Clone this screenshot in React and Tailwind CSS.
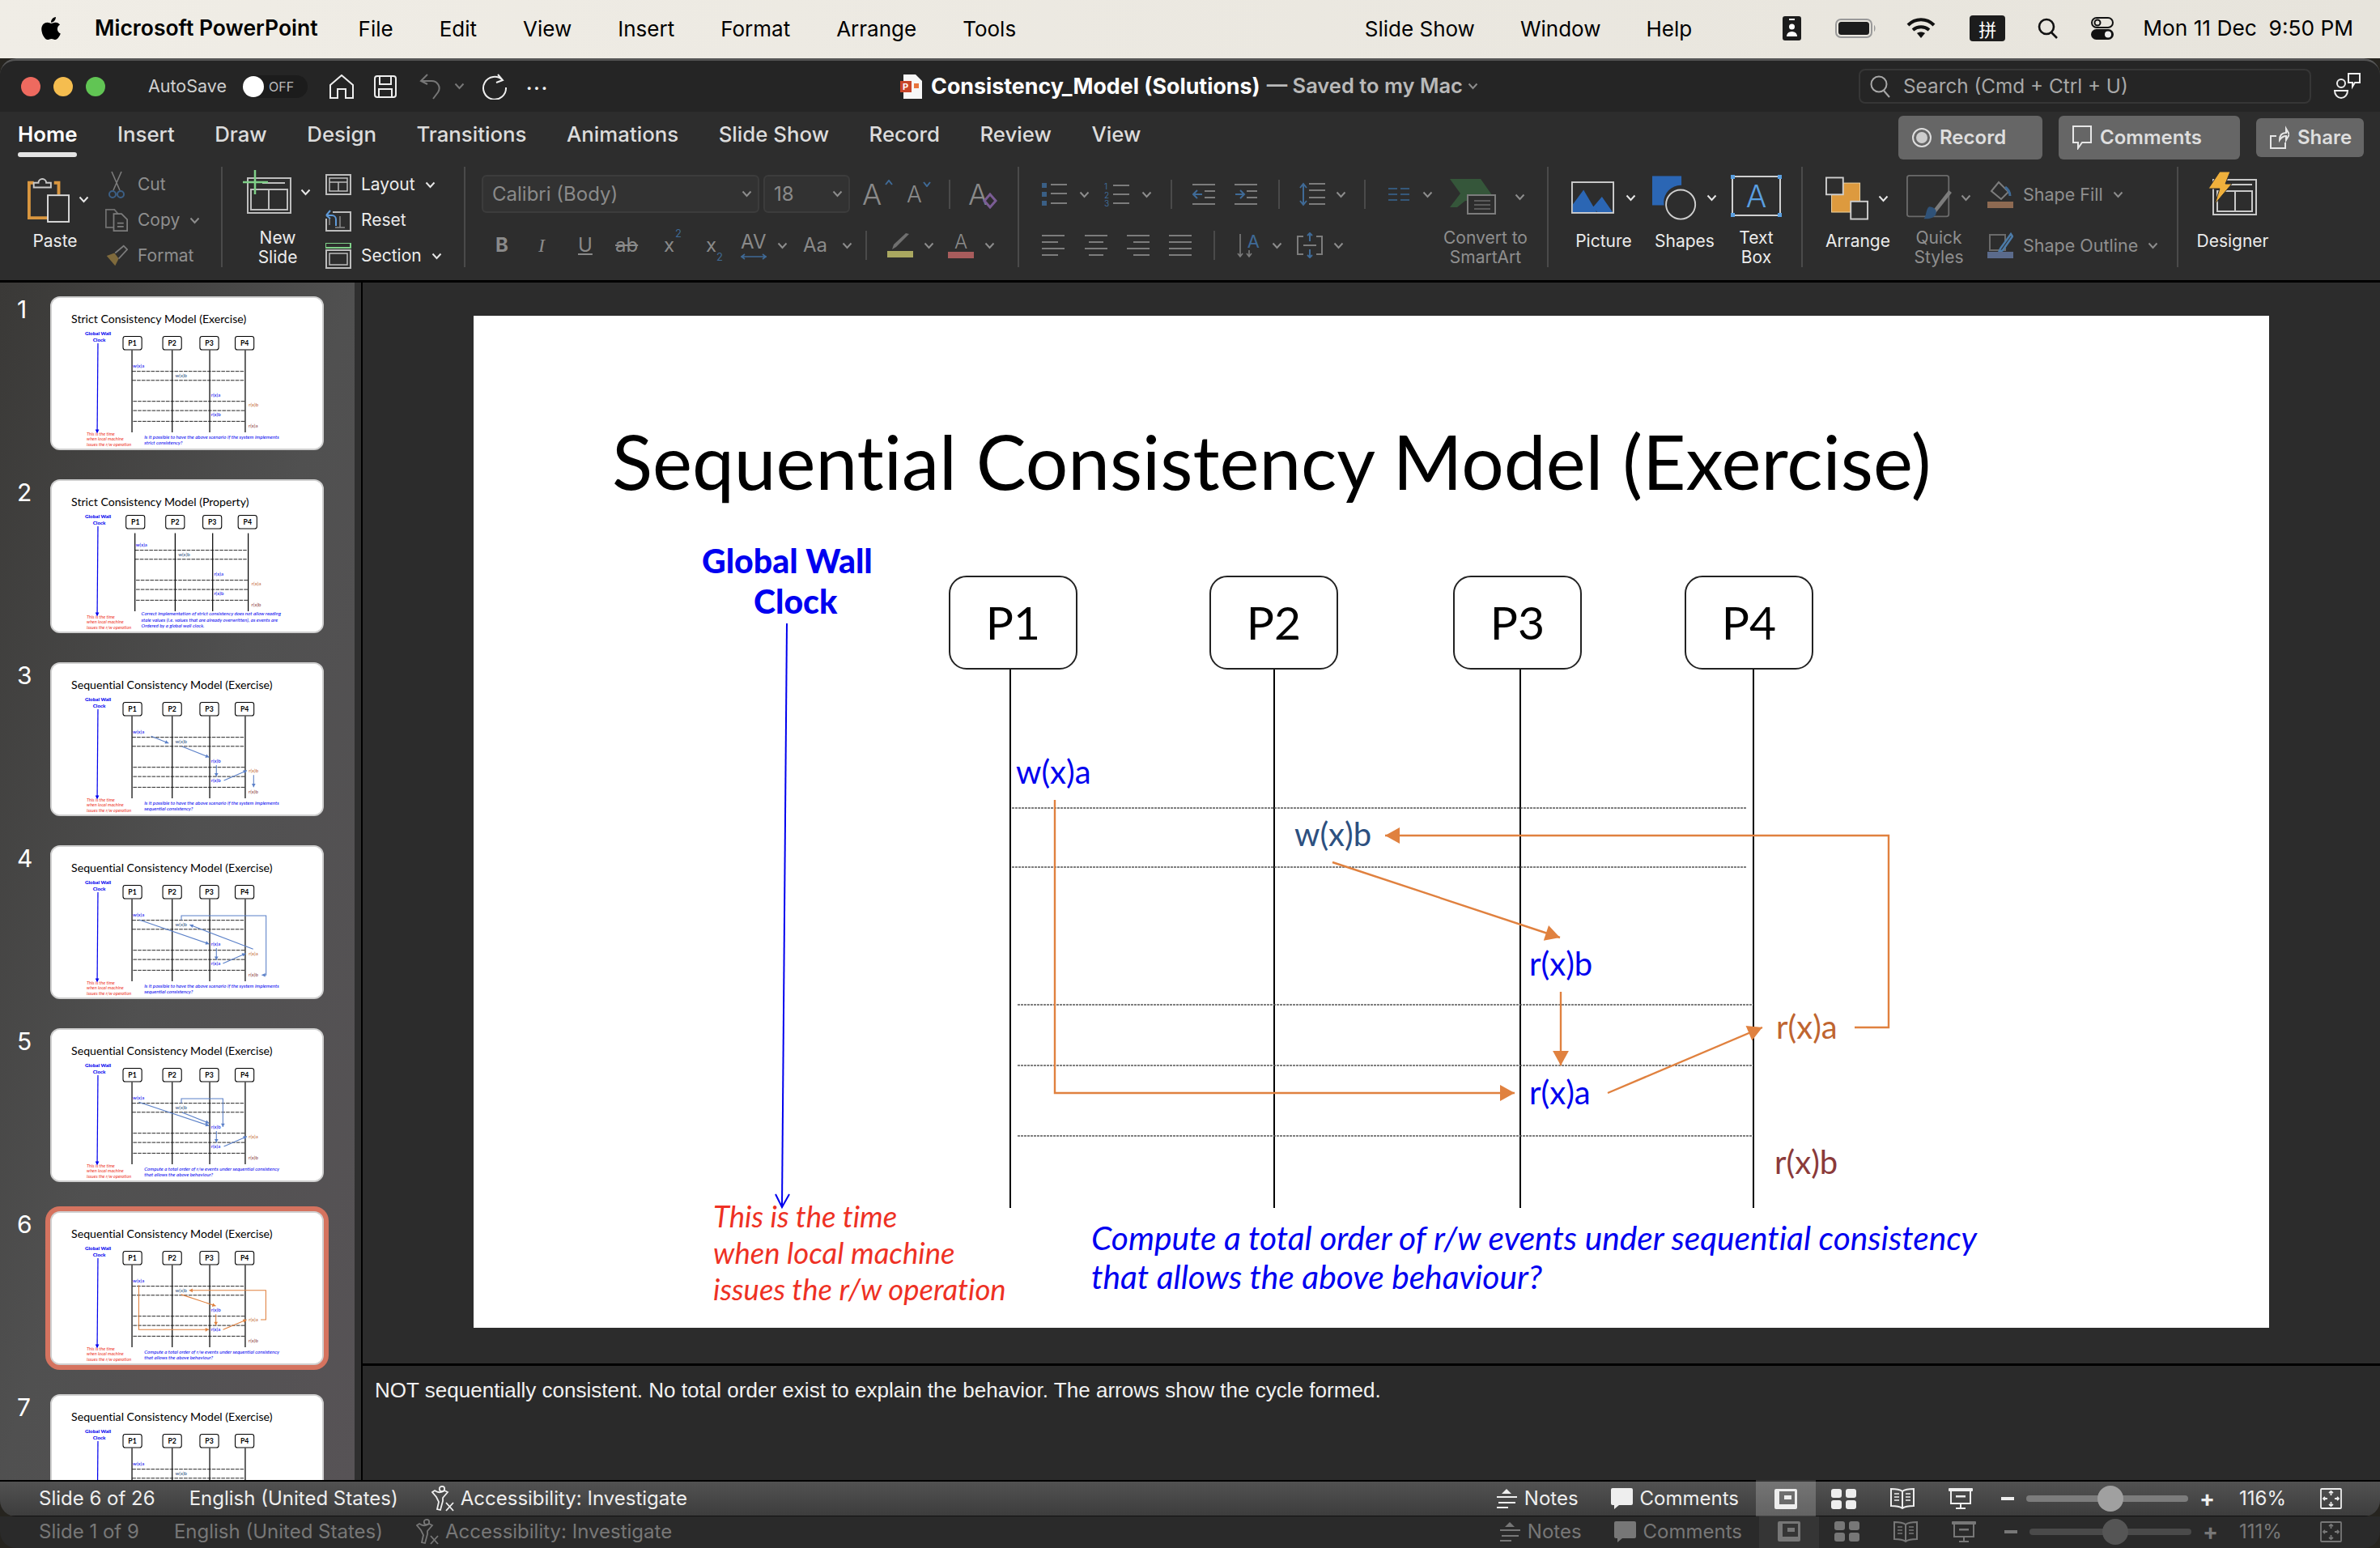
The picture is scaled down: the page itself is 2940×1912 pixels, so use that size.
import { FaApple } from 'react-icons/fa';

const ui = "font-['Inter','Noto_Sans',sans-serif]";
const lato = "font-['Lato','Noto_Sans',sans-serif]";

const BLUE = '#0000ee';
const NAVY = '#2d5080';
const ORANGE = '#bf6530';
const MAROON = '#8b3a3a';
const LINK = '#e0813f';
const THUMB_ARROW = '#5b80c8';

// ---------- slide data, all in slide coordinates (2218 x 1250) ----------
const laneX = [663, 989, 1293, 1581];
const boxes = [
  { t: 'P1', x: 587, w: 159 },
  { t: 'P2', x: 909, w: 159 },
  { t: 'P3', x: 1210, w: 159 },
  { t: 'P4', x: 1496, w: 159 },
];
const dashes = [
  [665, 1573, 608],
  [665, 1573, 681],
  [672, 1581, 851],
  [672, 1581, 926],
  [672, 1581, 1013],
];

const labelSet = (a, b, c, d) => [
  { t: 'w(x)a', x: 670, y: 563, c: BLUE },
  { t: 'w(x)b', x: 1014, y: 640, c: NAVY },
  { t: a, x: 1304, y: 800, c: BLUE },
  { t: b, x: 1609, y: 878, c: ORANGE },
  { t: c, x: 1304, y: 959, c: BLUE },
  { t: d, x: 1607, y: 1045, c: MAROON },
];

const askSeq = ['Is it possible to have the above scenario if the system implements', 'sequential consistency?'];
const askTotal = ['Compute a total order of r/w events under sequential consistency', 'that allows the above behaviour?'];

const mainLinks = [
  { pts: [[718, 598], [718, 960], [1286, 960]] },
  { pts: [[1706, 879], [1748, 879], [1748, 642], [1126, 642]] },
  { pts: [[1061, 675], [1342, 768]] },
  { pts: [[1343, 835], [1343, 926]] },
  { pts: [[1401, 960], [1592, 879]] },
];

const slides = [
  { title: 'Strict Consistency Model (Exercise)', labels: labelSet('r(x)a', 'r(x)b', 'r(x)b', 'r(x)a'), ask: ['Is it possible to have the above scenario if the system implements', 'strict consistency?'], links: [] },
  { title: 'Strict Consistency Model (Property)', labels: labelSet('r(x)a', 'r(x)a', 'r(x)b', 'r(x)b'), dx: 24, dy: -33, askX: 739, askY: 1065, ask: ['Correct implementation of strict consistency does not allow reading', 'stale values (i.e. values that are already overwritten), as events are', 'Ordered by a global wall clock.'], links: [] },
  {
    title: 'Sequential Consistency Model (Exercise)', labels: labelSet('r(x)b', 'r(x)b', 'r(x)b', 'r(x)b'), ask: askSeq, color: THUMB_ARROW,
    links: [
      { pts: [[818, 599], [960, 656]] },
      { pts: [[1069, 682], [1288, 770]] },
      { pts: [[1347, 833], [1347, 927]] },
      { pts: [[1408, 958], [1594, 877]] },
      { pts: [[1649, 914], [1649, 1012]] },
    ],
  },
  {
    title: 'Sequential Consistency Model (Exercise)', labels: labelSet('r(x)a', 'r(x)a', 'r(x)a', 'r(x)b'), ask: askSeq, color: THUMB_ARROW,
    links: [
      { pts: [[720, 604], [1288, 800]] },
      { pts: [[1347, 833], [1347, 930]] },
      { pts: [[1400, 958], [1584, 877]] },
      { pts: [[1645, 842], [1131, 645]] },
      { pts: [[1063, 608], [1063, 571], [1750, 571], [1750, 1052], [1715, 1052]] },
    ],
  },
  {
    title: 'Sequential Consistency Model (Exercise)', labels: labelSet('r(x)b', 'r(x)a', 'r(x)a', 'r(x)b'), ask: askTotal, color: THUMB_ARROW,
    links: [
      { pts: [[718, 598], [1288, 790]] },
      { pts: [[1069, 682], [1288, 770]] },
      { pts: [[1347, 833], [1347, 927]] },
      { pts: [[1408, 958], [1594, 877]] },
      { pts: [[1063, 608], [1063, 571], [1400, 571], [1400, 800]] },
    ],
  },
  { title: 'Sequential Consistency Model (Exercise)', labels: labelSet('r(x)b', 'r(x)a', 'r(x)a', 'r(x)b'), ask: askTotal, color: LINK, links: mainLinks },
  { title: 'Sequential Consistency Model (Exercise)', labels: labelSet('r(x)b', 'r(x)a', 'r(x)a', 'r(x)b'), ask: askSeq, links: [] },
];

// ---------- slide drawing ----------
function Link({ pts, color, width, head }) {
  const [ax, ay] = pts[pts.length - 2];
  const [bx, by] = pts[pts.length - 1];
  const len = Math.hypot(bx - ax, by - ay);
  const ux = (bx - ax) / len;
  const uy = (by - ay) / len;
  const hx = bx - ux * head;
  const hy = by - uy * head;
  const half = head * 0.55;
  const tri = `${bx},${by} ${hx - uy * half},${hy + ux * half} ${hx + uy * half},${hy - ux * half}`;
  return (
    <g>
      <polyline points={pts.map((p) => p.join(',')).join(' ')} fill="none" stroke={color} strokeWidth={width} />
      <polygon points={tri} fill={color} />
    </g>
  );
}

function Slide({ data, thumb }) {
  const dx = data.dx || 0;
  const dy = data.dy || 0;
  const lane = thumb ? 8 : 2;
  const dash = thumb ? 6 : 1.4;
  const link = thumb ? 7 : 2.4;
  return (
    <div className="relative w-[2218px] h-[1250px] bg-white overflow-hidden [font-variant-ligatures:none]">
      <div className={`absolute left-[171px] top-[115px] whitespace-nowrap text-black text-[92.7px] leading-[130px] ${lato}`}>{data.title}</div>

      <svg className="absolute inset-0" width="2218" height="1250" viewBox="0 0 2218 1250">
        <line x1="387" y1="380" x2="381" y2="1100" stroke={BLUE} strokeWidth={thumb ? 8 : 2} />
        {thumb ? (
          <polygon points="381,1112 366,1080 396,1080" fill={BLUE} />
        ) : (
          <polyline points="373,1085 381,1101 390,1085" fill="none" stroke={BLUE} strokeWidth="2" />
        )}
        {laneX.map((x) => (
          <line key={x} x1={x + dx} y1={437} x2={x + dx} y2={1102 + dy} stroke="#000" strokeWidth={lane} />
        ))}
        {dashes.map(([a, b, y]) => (
          <line key={y} x1={a + dx} y1={y + dy} x2={b + dx} y2={y + dy} stroke={thumb ? '#111' : '#555'} strokeWidth={dash} strokeDasharray={thumb ? '30 8' : '3 1'} />
        ))}
        {data.links.map((l, i) => (
          <Link key={i} pts={l.pts} color={data.color || LINK} width={link} head={thumb ? 28 : 18} />
        ))}
      </svg>

      {boxes.map((b) => (
        <div
          key={b.t}
          className={`absolute h-[116px] flex items-center justify-center bg-white rounded-[22px] text-[57px] text-black ${lato} ${thumb ? 'border-[7px] border-black font-bold' : 'border-2 border-[#222]'}`}
          style={{ left: b.x + dx, top: 321 + dy, width: b.w }}
        >
          {b.t}
        </div>
      ))}

      <div className={`absolute left-[282px] top-[278px] w-[260px] text-[#0000f0] text-[41px] leading-[50px] font-black ${lato}`}>
        <div>Global Wall</div>
        <div className="pl-[64px]">Clock</div>
      </div>

      {data.labels.map((l) => (
        <div
          key={l.t + l.x + l.y}
          className={`absolute -translate-y-1/2 whitespace-nowrap text-[40px] leading-[50px] ${lato}`}
          style={{ left: l.x + dx, top: l.y + dy, color: l.c }}
        >
          {l.t}
        </div>
      ))}

      <div className={`absolute left-[296px] top-[1090px] text-[#ee3124] italic text-[36.5px] leading-[45px] whitespace-nowrap ${lato}`}>
        <div>This is the time</div>
        <div>when local machine</div>
        <div>issues the r/w operation</div>
      </div>

      <div
        className={`absolute italic text-[#0000f0] text-[40.7px] leading-[48px] whitespace-nowrap ${lato}`}
        style={{ left: data.askX || 763, top: data.askY || 1115 }}
      >
        {data.ask.map((t) => (
          <div key={t}>{t}</div>
        ))}
      </div>
    </div>
  );
}

function Thumb({ n, data, active }) {
  return (
    <div className="flex items-start shrink-0">
      <div className={`w-[62px] pl-[21px] text-white text-[30px] leading-[32px] ${ui}`}>{n}</div>
      <div className={`relative w-[338px] h-[190px] rounded-[12px] overflow-hidden border-2 border-[#cfcfcf] bg-white ${active ? 'ring-[6px] ring-[#d5735f]' : ''}`}>
        <div className="absolute -top-[2px] -left-[2px] origin-top-left scale-[0.1524]">
          <Slide data={data} thumb />
        </div>
      </div>
    </div>
  );
}

// ---------- small icons ----------
function Chev({ className = 'text-[#e6e6e6]' }) {
  return (
    <svg className={`shrink-0 ${className}`} width="13" height="9" viewBox="0 0 13 9">
      <polyline points="1.5,1.5 6.5,7 11.5,1.5" fill="none" stroke="currentColor" strokeWidth="2" />
    </svg>
  );
}
const DimChev = () => <Chev className="text-[#8c8c8c]" />;

function Sep({ h = 'h-[36px]', m = 'mx-[13px]' }) {
  return <div className={`w-[2px] bg-[#4a4a4a] shrink-0 ${h} ${m}`} />;
}

function Lines({ ys, x1 = 0, x2 = 30, stroke = '#7c7c7c', w = 2 }) {
  return ys.map((y) => <line key={y} x1={x1} y1={y} x2={x2} y2={y} stroke={stroke} strokeWidth={w} />);
}

function AlignIcon({ kind }) {
  const rows = kind === 'left' ? [[0, 28], [0, 20], [0, 28], [0, 20]] : kind === 'center' ? [[0, 28], [5, 23], [0, 28], [5, 23]] : kind === 'right' ? [[0, 28], [8, 28], [0, 28], [8, 28]] : [[0, 28], [0, 28], [0, 28], [0, 28]];
  return (
    <svg width="29" height="28" viewBox="0 0 29 28">
      {rows.map(([a, b], i) => (
        <line key={i} x1={a} y1={2 + i * 8} x2={b} y2={2 + i * 8} stroke="#7c7c7c" strokeWidth="2" />
      ))}
    </svg>
  );
}

function PasteIcon() {
  return (
    <svg width="54" height="60" viewBox="0 0 54 60">
      <path d="M8 9H2V54H26M34 9h6v15" fill="none" stroke="#d9963f" strokeWidth="4" />
      <path d="M8 15V9h6a5 5 0 0 1 10 0h6v6z" fill="#2d2d2d" stroke="#c9c9c9" strokeWidth="2" />
      <rect x="26" y="25" width="27" height="34" fill="#2d2d2d" stroke="#dcdcdc" strokeWidth="2" />
    </svg>
  );
}
function CutIcon() {
  return (
    <svg width="24" height="34" viewBox="0 0 24 34">
      <path d="M6 1l10 23M18 1L8 24" stroke="#7c7c7c" strokeWidth="1.6" fill="none" />
      <circle cx="7" cy="29" r="4" fill="none" stroke="#3c5f85" strokeWidth="2" />
      <circle cx="17" cy="29" r="4" fill="none" stroke="#3c5f85" strokeWidth="2" />
    </svg>
  );
}
function CopyIcon() {
  return (
    <svg width="32" height="32" viewBox="0 0 32 32">
      <path d="M13 26H1V1h12l5 6" fill="none" stroke="#707070" strokeWidth="2" />
      <path d="M12 7h11l8 8v16H12z" fill="#2d2d2d" stroke="#7c7c7c" strokeWidth="2" />
      <path d="M17 20h9M17 25h9" stroke="#7c7c7c" strokeWidth="2" />
    </svg>
  );
}
function BrushIcon() {
  return (
    <svg width="32" height="30" viewBox="0 0 32 30">
      <path d="M2 15l12 14 5-10-6-8z" fill="#7f6a3c" />
      <path d="M14 11L26 1l5 5-12 13" fill="none" stroke="#7c7c7c" strokeWidth="2" />
    </svg>
  );
}
function NewSlideIcon() {
  return (
    <svg width="60" height="54" viewBox="0 0 60 54">
      <rect x="6" y="10" width="53" height="43" fill="none" stroke="#bdbdbd" strokeWidth="2" />
      <rect x="10" y="24" width="45" height="25" fill="none" stroke="#bdbdbd" strokeWidth="2" />
      <path d="M32 24v25M24 16h28" stroke="#bdbdbd" strokeWidth="2" />
      <path d="M15 0v30M0 15h31" stroke="#7fd088" strokeWidth="2.5" />
    </svg>
  );
}
function LayoutIcon() {
  return (
    <svg width="32" height="26" viewBox="0 0 32 26">
      <rect x="1" y="1" width="30" height="24" fill="none" stroke="#bdbdbd" strokeWidth="2" />
      <rect x="5" y="5" width="22" height="16" fill="none" stroke="#bdbdbd" strokeWidth="1.5" />
      <path d="M5 10h22M16 10v11" stroke="#bdbdbd" strokeWidth="1.5" />
    </svg>
  );
}
function ResetIcon() {
  return (
    <svg width="32" height="28" viewBox="0 0 32 28">
      <path d="M9 4h22v23H1V12" fill="none" stroke="#bdbdbd" strokeWidth="2" />
      <path d="M5 20V11M18 9v14M12 23h12" fill="none" stroke="#8a8a8a" strokeWidth="1.5" />
      <path d="M1 8l5-6M1 8l5 4M1 8h7a5 5 0 0 1 5 5v8" fill="none" stroke="#5f9ad8" strokeWidth="2" />
    </svg>
  );
}
function SectionIcon() {
  return (
    <svg width="32" height="32" viewBox="0 0 32 32">
      <rect x="0" y="0" width="31" height="6" fill="none" stroke="#7fd088" strokeWidth="2" />
      <rect x="1" y="9" width="30" height="22" fill="none" stroke="#bdbdbd" strokeWidth="2" />
      <rect x="5" y="13" width="22" height="14" fill="none" stroke="#bdbdbd" strokeWidth="1.5" />
    </svg>
  );
}
function BulletIcon() {
  return (
    <svg width="31" height="28" viewBox="0 0 31 28">
      <rect x="0" y="0" width="6" height="6" fill="#3a5f85" />
      <rect x="0" y="11" width="6" height="6" fill="#3a5f85" />
      <rect x="0" y="22" width="6" height="6" fill="#3a5f85" />
      <Lines ys={[2, 13, 25]} x1={11} x2={31} />
    </svg>
  );
}
function NumberIcon() {
  return (
    <svg width="31" height="30" viewBox="0 0 31 30">
      <text x="0" y="9" fontSize="10" fill="#3f6a96" fontFamily="Inter, sans-serif">1</text>
      <text x="0" y="20" fontSize="10" fill="#3f6a96" fontFamily="Inter, sans-serif">2</text>
      <text x="0" y="30" fontSize="10" fill="#3f6a96" fontFamily="Inter, sans-serif">3</text>
      <Lines ys={[4, 15, 26]} x1={11} x2={31} />
    </svg>
  );
}
function IndentIcon({ flip }) {
  return (
    <svg width="28" height="28" viewBox="0 0 28 28">
      <Lines ys={[2, 26]} x2={28} />
      <Lines ys={[10, 18]} x1={15} x2={28} />
      <path d={flip ? 'M1 14h10M7 9l5 5-5 5' : 'M12 14H2M6 9l-5 5 5 5'} fill="none" stroke="#3f6a96" strokeWidth="2" />
    </svg>
  );
}
function LineSpaceIcon() {
  return (
    <svg width="32" height="30" viewBox="0 0 32 30">
      <Lines ys={[2, 10, 19, 27]} x1={12} x2={32} />
      <path d="M5 2v26M1 7l4-5 4 5M1 23l4 5 4-5" fill="none" stroke="#3f6a96" strokeWidth="2" />
    </svg>
  );
}
function ColumnsIcon() {
  return (
    <svg width="26" height="16" viewBox="0 0 26 16">
      <Lines ys={[1, 8, 15]} x2={11} stroke="#35587a" />
      <Lines ys={[1, 8, 15]} x1={15} x2={26} stroke="#35587a" />
    </svg>
  );
}
function SmartArtIcon() {
  return (
    <svg width="69" height="44" viewBox="0 0 69 44">
      <path d="M0 0h38l19 27H19l-10 8H0l13-17z" fill="#35563a" />
      <rect x="22" y="20" width="34" height="23" fill="#2d2d2d" stroke="#7c7c7c" strokeWidth="2" />
      <path d="M30 27h20M30 32h20M30 37h20" stroke="#6b6b6b" strokeWidth="1.5" />
    </svg>
  );
}
function PictureIcon() {
  return (
    <svg width="56" height="42" viewBox="0 0 56 42">
      <rect x="1" y="1" width="54" height="40" fill="#2d2d2d" stroke="#cfcfcf" strokeWidth="2" />
      <path d="M2 40V30L16 11l17 29zM28 34l12-14 14 20H34z" fill="#2b66b4" />
      <path d="M44 7a6 6 0 0 0 3 10 6 6 0 0 1-3-10z" fill="#e0a23f" />
    </svg>
  );
}
function ShapesIcon() {
  return (
    <svg width="59" height="56" viewBox="0 0 59 56">
      <rect x="0" y="0" width="38" height="38" fill="#2b66b4" />
      <circle cx="37" cy="34" r="22" fill="#2d2d2d" />
      <circle cx="37" cy="37" r="19" fill="none" stroke="#d0d0d0" strokeWidth="2" />
    </svg>
  );
}
function TextBoxIcon() {
  return (
    <div className="relative w-[61px] h-[50px] border-2 border-[#cfcfcf] flex items-center justify-center text-[#5a9fe0] text-[38px] font-light leading-none">
      A
      <span className="absolute -left-[3px] -top-[3px] w-[5px] h-[5px] bg-[#5a9fe0]" />
      <span className="absolute -right-[3px] -top-[3px] w-[5px] h-[5px] bg-[#5a9fe0]" />
      <span className="absolute -left-[3px] -bottom-[3px] w-[5px] h-[5px] bg-[#5a9fe0]" />
      <span className="absolute -right-[3px] -bottom-[3px] w-[5px] h-[5px] bg-[#5a9fe0]" />
    </div>
  );
}
function ArrangeIcon() {
  return (
    <svg width="56" height="56" viewBox="0 0 56 56">
      <rect x="8" y="8" width="37" height="38" fill="#dd9a3e" stroke="#f0d8a8" strokeWidth="1" />
      <rect x="1" y="1" width="22" height="22" fill="#2d2d2d" stroke="#cfcfcf" strokeWidth="2" />
      <rect x="33" y="32" width="22" height="23" fill="#2d2d2d" stroke="#cfcfcf" strokeWidth="2" />
    </svg>
  );
}
function QuickStylesIcon() {
  return (
    <svg width="60" height="60" viewBox="0 0 60 60">
      <rect x="1" y="1" width="55" height="54" rx="3" fill="none" stroke="#6a6a6a" strokeWidth="2" />
      <path d="M58 22L36 50" stroke="#7c7c7c" strokeWidth="5" />
      <path d="M30 42c6 0 11 4 9 10-2 5-10 7-16 6 4-4 2-12 7-16z" fill="#2f5278" />
    </svg>
  );
}
function FillIcon() {
  return (
    <svg width="32" height="34" viewBox="0 0 32 34">
      <path d="M5 13L14 2l12 12-9 9z" fill="none" stroke="#7c7c7c" strokeWidth="2" />
      <path d="M22 8c4 3 6 7 6 11" fill="none" stroke="#3f6a96" strokeWidth="3" />
      <rect x="0" y="26" width="32" height="8" fill="#8e6a52" />
    </svg>
  );
}
function OutlineIcon() {
  return (
    <svg width="32" height="32" viewBox="0 0 32 32">
      <rect x="3" y="3" width="19" height="19" fill="none" stroke="#6a6a6a" strokeWidth="2" />
      <path d="M29 2L16 20l-2 5 5-3L31 5z" fill="#2d2d2d" stroke="#4c7ba8" strokeWidth="2.5" />
      <rect x="0" y="24" width="32" height="8" fill="#5b6b8c" />
    </svg>
  );
}
function DesignerIcon() {
  return (
    <svg width="60" height="54" viewBox="0 0 60 54">
      <rect x="6" y="10" width="53" height="43" fill="#2d2d2d" stroke="#c9c9c9" strokeWidth="2" />
      <rect x="11" y="24" width="43" height="25" fill="none" stroke="#c9c9c9" strokeWidth="2" />
      <path d="M33 24v25M26 16h28" stroke="#c9c9c9" strokeWidth="2" />
      <path d="M14 0h13l-6 15h8L8 40l6-19H0z" fill="#efb03c" stroke="#2d2d2d" strokeWidth="1" />
    </svg>
  );
}
function PptIcon() {
  return (
    <svg width="27" height="30" viewBox="0 0 27 30">
      <path d="M4 0h15l8 8v22H4z" fill="#f7f7f7" />
      <rect x="0" y="8" width="14" height="14" fill="#c8452a" />
      <text x="3" y="19" fontSize="11" fontWeight="700" fill="#fff" fontFamily="Inter, sans-serif">P</text>
      <path d="M17 11h6v6h-6z" fill="#e8743c" />
    </svg>
  );
}
function PeopleIcon() {
  return (
    <svg width="35" height="33" viewBox="0 0 35 33">
      <circle cx="10" cy="13" r="5" fill="none" stroke="#eee" strokeWidth="2" />
      <path d="M2 22h16a8 9 0 0 1-16 0z" fill="none" stroke="#eee" strokeWidth="2" />
      <path d="M19 1h14v11h-6l-3 5v-5h-5z" fill="none" stroke="#eee" strokeWidth="2" />
    </svg>
  );
}
function AccessIcon() {
  return (
    <svg width="30" height="32" viewBox="0 0 30 32" fill="none" stroke="currentColor" strokeWidth="1.8">
      <circle cx="13" cy="4" r="3.2" />
      <path d="M1 8l3-2c4 3 8 3 12 0l4 2-6 7v4l-3 11-4-1 2-9-3-6z" />
      <path d="M18 21l9 10M27 21l-9 10" />
    </svg>
  );
}
function NotesIcon() {
  return (
    <svg width="27" height="24" viewBox="0 0 27 24" fill="currentColor">
      <path d="M13 0l6 6H7z" />
      <path d="M1 9h25v2H1zM3 16h21v2H3zM1 22h14v2H1z" />
    </svg>
  );
}
function BubbleIcon() {
  return (
    <svg width="27" height="26" viewBox="0 0 27 26" fill="currentColor">
      <path d="M2 0h23a2 2 0 0 1 2 2v17a2 2 0 0 1-2 2H10l-6 5v-5H2a2 2 0 0 1-2-2V2a2 2 0 0 1 2-2z" />
    </svg>
  );
}
function ViewNormal() {
  return (
    <svg width="28" height="25" viewBox="0 0 28 25">
      <path fillRule="evenodd" d="M2 0h24a2 2 0 0 1 2 2v21a2 2 0 0 1-2 2H2a2 2 0 0 1-2-2V2a2 2 0 0 1 2-2zM6 3v16h19V3z" fill="currentColor" />
      <rect x="12" y="8" width="9" height="5" fill="currentColor" />
    </svg>
  );
}
function ViewGrid() {
  return (
    <svg width="31" height="25" viewBox="0 0 31 25" fill="currentColor">
      <rect x="0" y="0" width="13" height="11" rx="3" />
      <rect x="18" y="0" width="13" height="11" rx="3" />
      <rect x="0" y="14" width="13" height="11" rx="3" />
      <rect x="18" y="14" width="13" height="11" rx="3" />
    </svg>
  );
}
function ViewBook() {
  return (
    <svg width="30" height="26" viewBox="0 0 30 26" fill="none" stroke="currentColor" strokeWidth="2">
      <path d="M15 4C11 1 6 1 1 1v21c5 0 10 0 14 3 4-3 9-3 14-3V1c-5 0-10 0-14 3zM15 4v21" />
      <path d="M5 7h6M5 11h6M5 15h6M19 7h6M19 11h6M19 15h6" strokeWidth="1.6" />
    </svg>
  );
}
function ViewScreen() {
  return (
    <svg width="30" height="26" viewBox="0 0 30 26">
      <rect x="0" y="0" width="30" height="4" rx="1" fill="currentColor" />
      <path d="M3 4v15h24V4M15 19v6M9 25h12" fill="none" stroke="currentColor" strokeWidth="2" />
      <rect x="9" y="9" width="12" height="2.5" fill="currentColor" />
    </svg>
  );
}
function FitIcon() {
  return (
    <svg width="27" height="26" viewBox="0 0 27 26" fill="none" stroke="currentColor" strokeWidth="1.8">
      <rect x="1" y="1" width="25" height="24" rx="1" />
      <path d="M13.5 4v5M11 6l2.5-2 2.5 2M13.5 22v-5M11 20l2.5 2 2.5-2M4 13h5M6 11l-2 2 2 2M23 13h-5M21 11l2 2-2 2" />
    </svg>
  );
}

// ---------- ribbon pieces ----------
function BigBtn({ lines, dim, className = '', bodyClass = 'justify-center', children }) {
  return (
    <div className={`flex flex-col shrink-0 ${className}`}>
      <div className={`h-[80px] flex items-center gap-[11px] ${bodyClass}`}>{children}</div>
      <div className={`text-center text-[21px] leading-[24px] whitespace-nowrap ${dim ? 'text-[#8f8f8f]' : 'text-[#ececec]'}`}>
        {lines.map((l) => (
          <div key={l}>{l}</div>
        ))}
      </div>
    </div>
  );
}

function SmallRow({ icon, iconW, label, dim, chev }) {
  return (
    <div className={`h-[44px] flex items-center text-[21px] ${dim ? 'text-[#8f8f8f]' : 'text-[#ececec]'}`}>
      <div className={`flex items-center justify-center shrink-0 ${iconW}`}>{icon}</div>
      <span className="ml-[12px]">{label}</span>
      {chev && <span className="ml-[12px]">{chev}</span>}
    </div>
  );
}

function Group({ className = '', children }) {
  return <div className={`h-[124px] shrink-0 border-r-2 border-[#4a4a4a] ${className}`}>{children}</div>;
}

function Ribbon() {
  return (
    <div className={`h-[208px] shrink-0 bg-[#2d2d2d] flex flex-col ${ui}`}>
      <div className="h-[68px] shrink-0 flex items-start pl-[22px] pr-[20px]">
        <div className="flex items-start gap-[49.5px] pt-[12px] text-[25.8px] leading-[32px] text-[#dcdcdc]">
          <div className="flex flex-col">
            <span className="font-semibold text-white">Home</span>
            <span className="mt-[6px] h-[6px] rounded-full bg-[#e4e4e4]" />
          </div>
          {['Insert', 'Draw', 'Design', 'Transitions', 'Animations', 'Slide Show', 'Record', 'Review', 'View'].map((t) => (
            <span key={t} className="font-medium">{t}</span>
          ))}
        </div>
        <div className="ml-auto flex items-center h-[64px] text-[#dedede] text-[24px] font-semibold">
          <div className="w-[178px] h-[54px] bg-[#666] rounded-md flex items-center pl-[17px] gap-[10px]">
            <span className="w-[24px] h-[24px] rounded-full border-2 border-[#ddd] flex items-center justify-center">
              <span className="w-[14px] h-[14px] rounded-full bg-[#ccc]" />
            </span>
            Record
          </div>
          <div className="ml-[20px] w-[224px] h-[54px] bg-[#666] rounded-md flex items-center pl-[17px] gap-[10px]">
            <svg width="24" height="30" viewBox="0 0 24 30" fill="none" stroke="#e6e6e6" strokeWidth="2">
              <path d="M1 1h22v20H12l-5 7v-7H1z" />
            </svg>
            Comments
          </div>
          <div className="ml-[20px] w-[133px] h-[48px] bg-[#666] rounded-md flex items-center pl-[17px] gap-[10px]">
            <svg width="24" height="30" viewBox="0 0 24 30" fill="none" stroke="#e6e6e6" strokeWidth="2">
              <path d="M8 13H1v15h18v-7M12 18c0-6 3-9 8-9V4l4 7-4 7v-5c-4 0-6 2-8 5z" />
            </svg>
            Share
          </div>
        </div>
      </div>

      <div className="flex items-start">
        {/* clipboard */}
        <Group className="w-[275px] flex pl-[26px]">
          <BigBtn className="w-[84px]" bodyClass="pl-[8px]" lines={['Paste']}>
            <PasteIcon />
            <Chev />
          </BigBtn>
          <div className="ml-[20px]">
            <SmallRow dim icon={<CutIcon />} iconW="w-[28px]" label="Cut" />
            <SmallRow dim icon={<CopyIcon />} iconW="w-[28px]" label="Copy" chev={<DimChev />} />
            <SmallRow dim icon={<BrushIcon />} iconW="w-[28px]" label="Format" />
          </div>
        </Group>

        {/* slides */}
        <Group className="w-[300px] flex pl-[25px]">
          <BigBtn className="w-[86px]" bodyClass="pb-[14px]" lines={['New', 'Slide']}>
            <NewSlideIcon />
            <Chev />
          </BigBtn>
          <div className="ml-[16px]">
            <SmallRow icon={<LayoutIcon />} iconW="w-[32px]" label="Layout" chev={<Chev />} />
            <SmallRow icon={<ResetIcon />} iconW="w-[32px]" label="Reset" />
            <SmallRow icon={<SectionIcon />} iconW="w-[32px]" label="Section" chev={<Chev />} />
          </div>
        </Group>

        {/* font */}
        <Group className="w-[684px] pl-[20px] pt-[10px] text-[#8a8a8a]">
          <div className="flex items-center h-[47px]">
            <div className="w-[343px] h-[47px] rounded-md border-2 border-[#3c3c3c] bg-[#323232] flex items-center justify-between pl-[11px] pr-[7px] text-[24px]">
              Calibri (Body)
              <DimChev />
            </div>
            <div className="ml-[5px] w-[107px] h-[47px] rounded-md border-2 border-[#3c3c3c] bg-[#323232] flex items-center justify-between pl-[11px] pr-[7px] text-[24px]">
              18
              <DimChev />
            </div>
            <div className="ml-[15px] relative w-[38px] text-[36px] font-light leading-none">
              A
              <svg className="absolute right-0 top-0" width="10" height="7" viewBox="0 0 10 7">
                <polyline points="1,6 5,1 9,6" fill="none" stroke="#3f6a96" strokeWidth="2" />
              </svg>
            </div>
            <div className="ml-[17px] relative w-[30px] text-[28px] font-light leading-none">
              A
              <svg className="absolute right-0 -top-[2px]" width="10" height="7" viewBox="0 0 10 7">
                <polyline points="1,1 5,6 9,1" fill="none" stroke="#3f6a96" strokeWidth="2" />
              </svg>
            </div>
            <Sep m="ml-[22px] mr-[22px]" />
            <div className="relative w-[36px] text-[36px] font-light leading-none">
              A
              <svg className="absolute right-0 bottom-0" width="18" height="20" viewBox="0 0 18 20">
                <path d="M9 2l7 8-7 8-7-8z" fill="none" stroke="#7a5c94" strokeWidth="3" />
              </svg>
            </div>
          </div>
          <div className="flex items-center h-[44px] mt-[18px] text-[24px]">
            <span className="ml-[17px] w-[15px] font-bold">B</span>
            <span className="ml-[38px] w-[13px] italic font-['Liberation_Serif',serif]">I</span>
            <span className="ml-[36px] w-[17px] underline">U</span>
            <span className="ml-[29px] w-[30px] line-through">ab</span>
            <span className="ml-[30px] w-[22px] relative">x<span className="absolute right-0 -top-[6px] text-[13px] text-[#3f6a96]">2</span></span>
            <span className="ml-[30px] w-[21px] relative">x<span className="absolute right-0 -bottom-[6px] text-[13px] text-[#3f6a96]">2</span></span>
            <span className="ml-[22px] w-[32px] relative leading-none -mt-[8px]">AV<svg className="absolute left-0 -bottom-[10px]" width="32" height="8" viewBox="0 0 32 8"><path d="M0 4h32M5 1L1 4l4 3M27 1l4 3-4 3" fill="none" stroke="#3f6a96" strokeWidth="1.6" /></svg></span>
            <span className="ml-[13px]"><DimChev /></span>
            <span className="ml-[19px] w-[35px]">Aa</span>
            <span className="ml-[13px]"><DimChev /></span>
            <Sep m="ml-[16px] mr-[25px]" />
            <div className="w-[32px] flex flex-col items-center">
              <svg width="26" height="22" viewBox="0 0 26 22">
                <path d="M24 1L8 17l-5 3 2-6L20 0z" fill="#6f6f6f" />
              </svg>
              <span className="w-[32px] h-[8px] bg-[#aaa860]" />
            </div>
            <span className="ml-[13px]"><DimChev /></span>
            <div className="ml-[17px] w-[32px] flex flex-col items-center leading-[24px]">
              <span className="font-light">A</span>
              <span className="w-[32px] h-[8px] bg-[#a85c5c]" />
            </div>
            <span className="ml-[13px]"><DimChev /></span>
          </div>
        </Group>

        {/* paragraph */}
        <Group className="w-[654px] flex">
          <div className="w-[517px] pl-[28px] pt-[16px]">
            <div className="flex items-center h-[36px]">
              <BulletIcon />
              <span className="ml-[15px]"><DimChev /></span>
              <span className="ml-[18px]"><NumberIcon /></span>
              <span className="ml-[15px]"><DimChev /></span>
              <Sep m="ml-[23px] mr-[25px]" />
              <IndentIcon />
              <span className="ml-[24px]"><IndentIcon flip /></span>
              <Sep m="ml-[26px] mr-[24px]" />
              <LineSpaceIcon />
              <span className="ml-[13px]"><DimChev /></span>
              <Sep m="ml-[22px] mr-[28px]" />
              <ColumnsIcon />
              <span className="ml-[16px]"><DimChev /></span>
            </div>
            <div className="flex items-center h-[36px] mt-[27px]">
              <AlignIcon kind="left" />
              <span className="ml-[24px]"><AlignIcon kind="center" /></span>
              <span className="ml-[23px]"><AlignIcon kind="right" /></span>
              <span className="ml-[23px]"><AlignIcon kind="full" /></span>
              <Sep m="ml-[26px] mr-[27px]" />
              <div className="relative w-[28px] h-[32px] text-[22px] leading-none text-[#3f6a96]">
                <span className="absolute right-0 top-0">A</span>
                <svg className="absolute left-0 top-0" width="28" height="32" viewBox="0 0 28 32">
                  <path d="M4 2v28M1 26l3 4 3-4M15 22v8M12 26l3 4 3-4" fill="none" stroke="#7c7c7c" strokeWidth="1.6" />
                </svg>
              </div>
              <span className="ml-[15px]"><DimChev /></span>
              <svg className="ml-[18px]" width="32" height="32" viewBox="0 0 32 32">
                <path d="M8 5H1v22h7M24 5h7v22h-7M8 16h16" fill="none" stroke="#7c7c7c" strokeWidth="2" />
                <path d="M16 1v10M13 4l3-3 3 3M16 21v10M13 28l3 3 3-3" fill="none" stroke="#3f6a96" strokeWidth="2" />
              </svg>
              <span className="ml-[13px]"><DimChev /></span>
            </div>
          </div>
          <BigBtn dim className="w-[118px]" bodyClass="pl-[15px] justify-start gap-[3px] pb-[2px]" lines={['Convert to', 'SmartArt']}>
            <SmartArtIcon />
            <DimChev />
          </BigBtn>
        </Group>

        {/* insert */}
        <Group className="w-[314px] flex pl-[28px]">
          <BigBtn className="w-[80px]" bodyClass="justify-start gap-[14px] pb-[4px]" lines={['Picture']}>
            <PictureIcon />
            <Chev />
          </BigBtn>
          <BigBtn className="ml-[20px] w-[80px]" bodyClass="justify-start gap-[10px] pb-[4px]" lines={['Shapes']}>
            <ShapesIcon />
            <Chev />
          </BigBtn>
          <BigBtn className="ml-[18px] w-[61px]" bodyClass="justify-center pb-[4px]" lines={['Text', 'Box']}>
            <TextBoxIcon />
          </BigBtn>
        </Group>

        {/* drawing */}
        <Group className="w-[464px] flex pl-[28px]">
          <BigBtn className="w-[78px]" bodyClass="justify-start gap-[12px] pb-[2px]" lines={['Arrange']}>
            <ArrangeIcon />
            <Chev />
          </BigBtn>
          <BigBtn dim className="ml-[22px] w-[80px]" bodyClass="justify-start gap-[9px]" lines={['Quick', 'Styles']}>
            <QuickStylesIcon />
            <DimChev />
          </BigBtn>
          <div className="ml-[20px] pt-[14px] text-[21.5px] text-[#8f8f8f]">
            <div className="flex items-center h-[40px] gap-[12px]">
              <FillIcon />
              Shape Fill
              <DimChev />
            </div>
            <div className="flex items-center h-[40px] mt-[23px] gap-[12px]">
              <OutlineIcon />
              Shape Outline
              <DimChev />
            </div>
          </div>
        </Group>

        {/* designer */}
        <div className="pl-[22px]">
          <BigBtn className="w-[90px]" bodyClass="justify-center pb-[14px]" lines={['Designer']}>
            <DesignerIcon />
          </BigBtn>
        </div>
      </div>
    </div>
  );
}

// ---------- window chrome ----------
function MenuBar() {
  return (
    <div className={`h-[72px] shrink-0 bg-linear-to-r from-[#f0ede6] to-[#e7e4dc] flex items-center pb-[2px] pl-[48px] pr-[33px] text-black text-[26px] ${ui}`}>
      <FaApple className="w-[30px] h-[32px]" />
      <span className="ml-[39px] font-semibold text-[26.5px]">Microsoft PowerPoint</span>
      <div className="ml-[50px] flex gap-[57px]">
        {['File', 'Edit', 'View', 'Insert', 'Format', 'Arrange', 'Tools'].map((t) => (
          <span key={t}>{t}</span>
        ))}
      </div>
      <div className="ml-auto flex items-center">
        <div className="flex gap-[56px]">
          {['Slide Show', 'Window', 'Help'].map((t) => (
            <span key={t}>{t}</span>
          ))}
        </div>
        <svg className="ml-[112px]" width="23" height="30" viewBox="0 0 23 30">
          <rect x="0" y="0" width="23" height="30" rx="3" fill="#1c1c1c" />
          <rect x="8" y="3" width="7" height="2" fill="#fff" />
          <circle cx="11.5" cy="13" r="3.5" fill="#fff" />
          <path d="M5 25c0-8 13-8 13 0z" fill="#fff" />
        </svg>
        <svg className="ml-[42px]" width="51" height="24" viewBox="0 0 51 24">
          <rect x="1" y="1" width="44" height="22" rx="6" fill="none" stroke="#999" strokeWidth="2" />
          <rect x="4" y="4" width="38" height="16" rx="3.5" fill="#1c1c1c" />
          <path d="M48 8c2 1 2 7 0 8z" fill="#999" />
        </svg>
        <svg className="ml-[37px]" width="36" height="26" viewBox="0 0 36 26" fill="none" stroke="#111" strokeWidth="4">
          <path d="M2 9c9-9 23-9 32 0" />
          <path d="M8 15c6-5 14-5 20 0" />
          <path d="M18 25l-5-6c3-2 7-2 10 0z" fill="#111" stroke="none" />
        </svg>
        <div className="ml-[42px] w-[44px] h-[32px] rounded-[4px] bg-[#1c1c1c] text-white text-[22px] leading-none flex items-center justify-center font-['Noto_Sans_CJK_SC',sans-serif]">拼</div>
        <svg className="ml-[40px]" width="26" height="26" viewBox="0 0 26 26" fill="none" stroke="#111" strokeWidth="2.6">
          <circle cx="11" cy="11" r="9" />
          <path d="M17 18l7 7" />
        </svg>
        <svg className="ml-[40px]" width="28" height="28" viewBox="0 0 28 28">
          <rect x="1" y="1" width="26" height="12" rx="6" fill="none" stroke="#111" strokeWidth="2" />
          <circle cx="8" cy="7" r="3.5" fill="none" stroke="#111" strokeWidth="2" />
          <rect x="0" y="15" width="28" height="13" rx="6.5" fill="#111" />
          <circle cx="21" cy="21.5" r="4" fill="#eee" />
        </svg>
        <span className="ml-[36px] whitespace-pre text-[26.3px]">Mon 11 Dec  9:50 PM</span>
      </div>
    </div>
  );
}

function TitleBar() {
  return (
    <div className={`h-[66px] shrink-0 bg-[#252525] border-t-[3px] border-[#555] rounded-t-[20px] flex items-center pl-[26px] pr-[23px] ${ui}`}>
      <span className="w-[24px] h-[24px] rounded-full bg-[#ee6a5f]" />
      <span className="ml-[16px] w-[24px] h-[24px] rounded-full bg-[#f5bd4f]" />
      <span className="ml-[16px] w-[24px] h-[24px] rounded-full bg-[#61c554]" />
      <span className="ml-[53px] text-[21.5px] text-[#d0d0d0]">AutoSave</span>
      <div className="ml-[20px] w-[80px] h-[28px] rounded-full bg-[#1c1c1c] flex items-center text-[16px] text-[#bbb]">
        <span className="w-[26px] h-[26px] rounded-full bg-white" />
        <span className="ml-[6px]">OFF</span>
      </div>
      <svg className="ml-[27px]" width="30" height="30" viewBox="0 0 30 30" fill="none" stroke="#eee" strokeWidth="2">
        <path d="M1 13L15 1l14 12v16h-9V18h-10v11H1z" />
      </svg>
      <svg className="ml-[25px]" width="28" height="28" viewBox="0 0 28 28" fill="none" stroke="#eee" strokeWidth="2">
        <rect x="1" y="1" width="26" height="26" rx="3" />
        <path d="M7 1v10h14V1M6 27V17h16v10" />
      </svg>
      <svg className="ml-[28px]" width="27" height="32" viewBox="0 0 27 32" fill="none" stroke="#777" strokeWidth="2">
        <path d="M10 1L2 9l8 4M2 9h13c8 0 12 8 8 14l-6 8" />
      </svg>
      <span className="ml-[16px]"><Chev className="text-[#777]" /></span>
      <svg className="ml-[20px]" width="33" height="32" viewBox="0 0 33 32" fill="none" stroke="#eee" strokeWidth="2">
        <path d="M27 8a14 14 0 1 0 4 9M21 1l6 7-8 3" />
      </svg>
      <span className="ml-[23px] text-[#eee] text-[22px] font-bold tracking-[2px] leading-[30px] -mt-[8px]">...</span>

      <span className="ml-[434px]"><PptIcon /></span>
      <span className="ml-[11px] text-[26.8px] font-bold text-white whitespace-nowrap">Consistency_Model (Solutions)</span>
      <span className="ml-[8px] text-[25.5px] font-semibold text-[#b9b9b9] whitespace-nowrap">— Saved to my Mac</span>
      <span className="ml-[6px]"><DimChev /></span>

      <div className="ml-auto w-[559px] h-[43px] rounded-lg border-2 border-[#363636] flex items-center pl-[12px] text-[24.3px] text-[#a8a8a8]">
        <svg width="26" height="28" viewBox="0 0 26 28" fill="none" stroke="#a8a8a8" strokeWidth="2">
          <circle cx="11" cy="11" r="9.5" />
          <path d="M17 19l7 8" />
        </svg>
        <span className="ml-[15px]">Search (Cmd + Ctrl + U)</span>
      </div>
      <span className="ml-[27px]"><PeopleIcon /></span>
    </div>
  );
}

function StatusLeft({ dim, slide }) {
  return (
    <div className={`flex items-center text-[24px] ${dim ? 'text-[#777]' : 'text-[#eee]'} ${ui}`}>
      <span className="whitespace-nowrap">{slide}</span>
      <span className={`whitespace-nowrap ${dim ? 'ml-[43px]' : 'ml-[42px]'}`}>English (United States)</span>
      <span className="ml-[41px]"><AccessIcon /></span>
      <span className="ml-[6px] whitespace-nowrap">Accessibility: Investigate</span>
    </div>
  );
}

function StatusRight({ dim, zoom, knob }) {
  return (
    <div className={`ml-auto flex items-center h-full text-[24px] ${dim ? 'text-[#777]' : 'text-[#eee]'} ${ui}`}>
      <NotesIcon />
      <span className="ml-[8px]">Notes</span>
      <span className="ml-[40px]"><BubbleIcon /></span>
      <span className="ml-[9px]">Comments</span>
      <div className={`ml-[21px] w-[74px] h-[46px] flex items-center justify-center ${dim ? 'bg-white/5' : 'bg-white/20'}`}>
        <ViewNormal />
      </div>
      <span className="ml-[19px]"><ViewGrid /></span>
      <span className="ml-[42px]"><ViewBook /></span>
      <span className="ml-[42px]"><ViewScreen /></span>
      <span className={`ml-[35px] w-[16px] h-[4px] ${dim ? 'bg-[#777]' : 'bg-[#eee]'}`} />
      <div className={`ml-[15px] relative w-[200px] h-[8px] rounded-full ${dim ? 'bg-[#4a4a4a]' : 'bg-[#7c7c7c]'}`}>
        <div className={`absolute -top-[12px] w-[32px] h-[32px] rounded-full ${dim ? 'bg-[#555]' : 'bg-[#a0a0a0]'}`} style={{ left: knob }} />
      </div>
      <span className="ml-[14px] text-[28px] leading-none font-bold">+</span>
      <span className={`w-[60px] ${dim ? 'ml-[26px]' : 'ml-[30px]'}`}>{zoom}</span>
      <span className="ml-[40px]"><FitIcon /></span>
      <span className="w-[47px]" />
    </div>
  );
}

export default function App() {
  return (
    <div className="w-[2940px] h-[1912px] overflow-hidden flex flex-col bg-[#26241f]">
      <MenuBar />
      <div className="h-[1801px] shrink-0 flex flex-col rounded-[20px] overflow-hidden bg-[#2d2d2d] relative z-10">
        <TitleBar />
        <Ribbon />

        <div className="h-[1482px] shrink-0 flex border-t-[3px] border-black">
          <div className="w-[438px] shrink-0 bg-linear-to-br from-[#3a3937] via-[#505050] to-[#575356] overflow-hidden pt-[17px] flex flex-col gap-[36px]">
            {slides.map((s, i) => (
              <Thumb key={i} n={i + 1} data={s} active={i === 5} />
            ))}
          </div>
          <div className="w-[8px] shrink-0 bg-[#2f2f2f]" />
          <div className="w-[2px] shrink-0 bg-black" />
          <div className="flex-1 flex flex-col min-w-0">
            <div className="flex-1 bg-[#2c2c2c] pt-[41px] pl-[137px]">
              <div className="w-[2218px] h-[1250px] outline-2 outline-[#d8d8d8] -outline-offset-2">
                <Slide data={slides[5]} />
              </div>
            </div>
            <div className="h-[144px] shrink-0 bg-[#2a2a2a] border-t-[3px] border-black pl-[15px] pt-[15px] text-[26.05px] leading-[30px] text-[#f2f2f2] font-['Liberation_Sans',Arial,sans-serif]">
              NOT sequentially consistent. No total order exist to explain the behavior. The arrows show the cycle formed.
            </div>
          </div>
        </div>

        <div className="h-[45px] shrink-0 bg-linear-to-b from-[#525252] to-[#3d3d3d] border-t-2 border-black border-b border-b-[#111] flex items-center pl-[48px]">
          <StatusLeft slide="Slide 6 of 26" />
          <StatusRight zoom="116%" knob={88} />
        </div>
      </div>

      <div className="flex-1 min-h-0 bg-[#2a2a2a] rounded-b-[20px] flex items-center pl-[48px] pb-[2px]">
        <StatusLeft dim slide="Slide 1 of 9" />
        <StatusRight dim zoom="111%" knob={90} />
      </div>
    </div>
  );
}
